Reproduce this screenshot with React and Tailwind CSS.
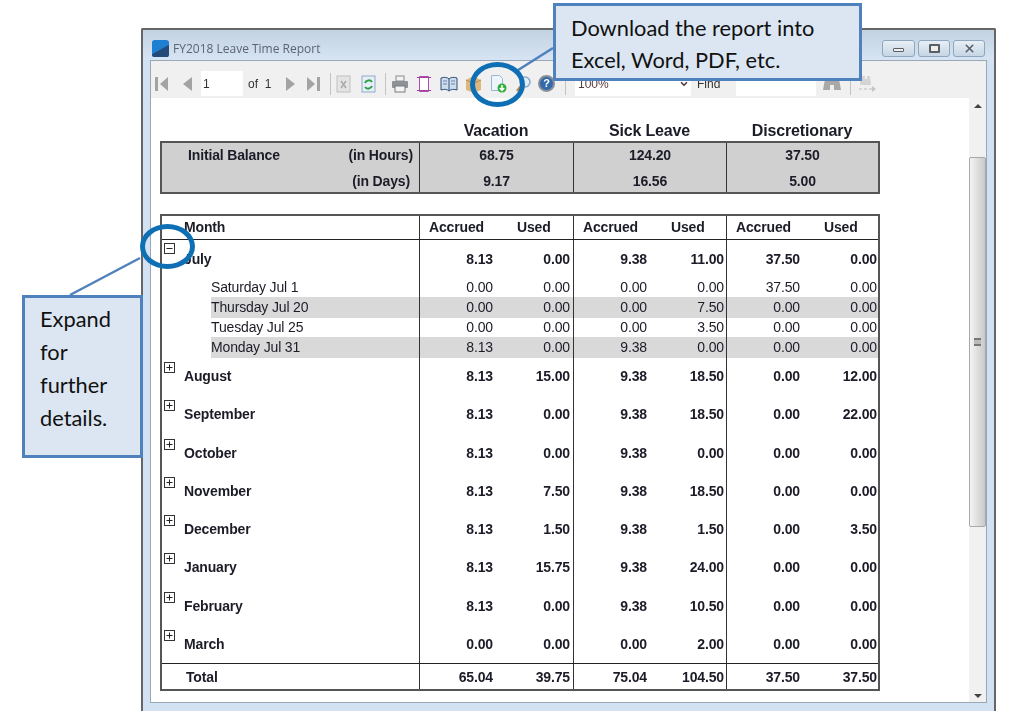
import { X, ChevronDown } from 'lucide-react';

const months = [
  { name: 'August', v: ['8.13', '15.00', '9.38', '18.50', '0.00', '12.00'] },
  { name: 'September', v: ['8.13', '0.00', '9.38', '18.50', '0.00', '22.00'] },
  { name: 'October', v: ['8.13', '0.00', '9.38', '0.00', '0.00', '0.00'] },
  { name: 'November', v: ['8.13', '7.50', '9.38', '18.50', '0.00', '0.00'] },
  { name: 'December', v: ['8.13', '1.50', '9.38', '1.50', '0.00', '3.50'] },
  { name: 'January', v: ['8.13', '15.75', '9.38', '24.00', '0.00', '0.00'] },
  { name: 'February', v: ['8.13', '0.00', '9.38', '10.50', '0.00', '0.00'] },
  { name: 'March', v: ['0.00', '0.00', '0.00', '2.00', '0.00', '0.00'] },
];

const details = [
  { name: 'Saturday Jul 1', v: ['0.00', '0.00', '0.00', '0.00', '37.50', '0.00'] },
  { name: 'Thursday Jul 20', v: ['0.00', '0.00', '0.00', '7.50', '0.00', '0.00'], shade: true },
  { name: 'Tuesday Jul 25', v: ['0.00', '0.00', '0.00', '3.50', '0.00', '0.00'] },
  { name: 'Monday Jul 31', v: ['8.13', '0.00', '9.38', '0.00', '0.00', '0.00'], shade: true },
];

const GRID = 'grid grid-cols-[257px_154px_153px_152px]';

function Pair({ a, b, className = '' }) {
  return (
    <div className={`flex h-full items-center border-l border-[#333] ${className}`}>
      <span className="w-[73px] text-right">{a}</span>
      <span className="w-[77px] text-right">{b}</span>
    </div>
  );
}

function Toggle({ open }) {
  return (
    <svg width="11" height="11" viewBox="0 0 11 11" className={`ml-[2px] shrink-0 self-start ${open ? 'mt-[3px]' : 'mt-[5px]'}`}>
      <rect x="0.5" y="0.5" width="10" height="10" fill="#fff" stroke="#333" />
      <path d={open ? 'M2.5 5.5h6' : 'M2.5 5.5h6M5.5 2.5v6'} stroke="#222" />
    </svg>
  );
}

function GroupRow({ name, v, open, h = 'h-[38.25px]', pad = 'pt-px' }) {
  return (
    <div className={`${GRID} ${h} font-bold`}>
      <div className="flex items-center">
        <Toggle open={open} />
        <span className={`ml-[9px] ${pad}`}>{name}</span>
      </div>
      <Pair a={v[0]} b={v[1]} className={pad} />
      <Pair a={v[2]} b={v[3]} className={pad} />
      <Pair a={v[4]} b={v[5]} className={pad} />
    </div>
  );
}

function DetailRow({ name, v, shade }) {
  return (
    <div className={`${GRID} h-5`}>
      <div className="pl-[49px]">
        <div className={`flex h-full items-center ${shade ? 'bg-[#d9d9d9]' : ''}`}>{name}</div>
      </div>
      {[0, 2, 4].map(i => (
        <div key={i} className={shade ? 'bg-[#d9d9d9]' : ''}>
          <Pair a={v[i]} b={v[i + 1]} />
        </div>
      ))}
    </div>
  );
}

// toolbar drawings
const Arrow = ({ dir, bar }) => (
  <svg width="13" height="16" viewBox="0 0 13 16">
    {dir === 'left' ? (
      <>
        {bar && <rect x="0" y="1" width="3" height="14" fill="#a3a3a3" />}
        <path d={bar ? 'M13 1v14L5 8z' : 'M11 1v14L2 8z'} fill="#a3a3a3" />
      </>
    ) : (
      <>
        <path d={bar ? 'M0 1v14L8 8z' : 'M2 1v14l9-7z'} fill="#a3a3a3" />
        {bar && <rect x="10" y="1" width="3" height="14" fill="#a3a3a3" />}
      </>
    )}
  </svg>
);

const Sep = ({ className }) => <div className={`h-[22px] w-px bg-[#c4c4c4] ${className}`} />;

const IconExport = () => (
  <svg width="15" height="18" viewBox="0 0 15 18">
    <rect x="1" y="1" width="13" height="16" fill="#e4e4e4" stroke="#c0c0c0" />
    <path d="M5 6l5 7M10 6l-5 7" stroke="#a9a9a9" strokeWidth="1.5" />
  </svg>
);
const IconRefresh = () => (
  <svg width="15" height="18" viewBox="0 0 15 18">
    <rect x="1" y="1" width="13" height="16" fill="#e6eff8" stroke="#8fa9c4" />
    <path d="M4 8a4 4 0 0 1 7-1M11 11a4 4 0 0 1-7 1" fill="none" stroke="#27a044" strokeWidth="2" />
  </svg>
);
const IconPrint = () => (
  <svg width="18" height="18" viewBox="0 0 18 18">
    <rect x="5" y="1" width="8" height="5" fill="#f3f3f3" stroke="#8a8a8a" />
    <rect x="1" y="6" width="16" height="7" rx="1" fill="#8d9298" />
    <rect x="4" y="11" width="10" height="6" fill="#f4f4f4" stroke="#7a7a7a" />
  </svg>
);
const IconLayout = () => (
  <svg width="14" height="18" viewBox="0 0 14 18">
    <path d="M2.5 1.5h9v15h-9z" fill="#fff" stroke="#b04fb0" />
    <path d="M0 2.5h14M0 15.5h14" stroke="#a03f9f" />
  </svg>
);
const IconBook = () => (
  <svg width="18" height="16" viewBox="0 0 18 16">
    <path d="M1 2c3-1 6-1 8 1 2-2 5-2 8-1v12c-3-1-6-1-8 1-2-2-5-2-8-1z" fill="#cfdcec" stroke="#2e4f7c" />
    <path d="M9 3v12" stroke="#2e4f7c" />
    <path d="M3 5h4M3 8h4M11 5h4M11 8h4" stroke="#6a86aa" />
  </svg>
);
const IconPackage = () => (
  <svg width="17" height="20" viewBox="0 0 17 20">
    <path d="M1 6l7-4 8 4v10l-7 3-8-3z" fill="#dcb77e" />
    <path d="M9 9v10M1 6l8 3 7-3" fill="none" stroke="#b58f55" />
  </svg>
);
const IconDownload = () => (
  <svg width="17" height="19" viewBox="0 0 17 19">
    <path d="M1.5 1.5h8l3 3v12h-11z" fill="#eef4fb" stroke="#9db7d3" />
    <circle cx="12" cy="14" r="4.5" fill="#2fae3c" />
    <path d="M12 11v5M9.8 14l2.2 2.4 2.2-2.4" fill="none" stroke="#fff" strokeWidth="1.5" />
  </svg>
);
const IconSearch = () => (
  <svg width="16" height="18" viewBox="0 0 16 18">
    <circle cx="10" cy="7" r="5" fill="#e4eef8" stroke="#88a8c8" strokeWidth="1.5" />
    <path d="M6 11l-4 5" stroke="#c28a3a" strokeWidth="2.5" />
  </svg>
);
const IconHelp = () => (
  <div className="flex h-[17px] w-[17px] items-center justify-center rounded-full border-2 border-[#8a8f96] bg-[#3268ac] text-[11px] font-bold text-white">?</div>
);
const IconBinoculars = () => (
  <svg width="18" height="15" viewBox="0 0 18 15">
    <path d="M2 3h5v2h4V3h5l2 11h-7V9H7v5H0z" fill="#a8a8a8" />
  </svg>
);
const IconFindNext = () => (
  <svg width="18" height="20" viewBox="0 0 18 20">
    <path d="M3 2h4v3h2V2h3l1 9H2z" fill="#d4d4d4" />
    <path d="M1 15h3M6 15h3M11 15h3" stroke="#bdbdbd" />
    <path d="M14 12l4 3-4 3z" fill="#c4c4c4" />
  </svg>
);

const CTRL = 'flex h-[17px] items-center justify-center rounded-[3px] border border-[#8ea6be] bg-gradient-to-b from-[#e8eff6] to-[#c6d5e5] text-[#5a5f66]';

export default function App() {
  return (
    <div className="relative h-[711px] w-[1024px] overflow-hidden bg-white font-['Liberation_Sans',Arial,sans-serif] text-[14px] tracking-[-0.15px] text-[#1c1c28]">
      {/* report window */}
      <div className="ml-[141px] mt-[28px] flex h-[683px] w-[855px] flex-col rounded-t-[2px] border-x-2 border-t-2 border-[#666] bg-[#d3e2f2] blur-[0.35px]">
        {/* title bar */}
        <div className="flex h-[30px] shrink-0 items-center bg-gradient-to-b from-[#c3d2e1] to-[#d6e4f3] px-[9px] pt-[7px] tracking-normal">
          <svg width="17" height="17" viewBox="0 0 18 18" className="shrink-0">
            <rect width="18" height="18" rx="3" fill="#1f7fd0" />
            <path d="M0 15L18 5v10a3 3 0 0 1-3 3H3a3 3 0 0 1-3-3z" fill="#234a78" />
          </svg>
          <span className="ml-[4px] font-['Open_Sans',sans-serif] text-[12px] text-[#5c6470]">FY2018 Leave Time Report</span>
          <div className="ml-auto flex gap-[3px]">
            <div className={`${CTRL} w-[33px]`}><div className="mt-[3px] h-[4px] w-[11px] rounded-[1px] border border-[#5a5f66] bg-[#eee]" /></div>
            <div className={`${CTRL} w-[32px]`}><div className="h-[9px] w-[11px] rounded-[1px] border-2 border-[#5a5f66] bg-[#eee]" /></div>
            <div className={`${CTRL} w-[32px]`}><X size={13} strokeWidth={3} /></div>
          </div>
        </div>

        {/* inner frame */}
        <div className="mx-[7px] flex h-[643px] w-[837px] shrink-0 flex-col border border-[#9aa7b5] bg-white">
          {/* toolbar */}
          <div className="flex h-[37px] shrink-0 items-center bg-[#f0f0f0] pl-[4px] pt-[8px] text-[12px] tracking-normal text-[#333]">
            <Arrow dir="left" bar />
            <div className="ml-[13px]"><Arrow dir="left" /></div>
            <div className="ml-[7px] flex h-[25px] w-[42px] items-center bg-white pl-[2px]">1</div>
            <span className="ml-[5px] w-[36px]">of&nbsp; 1</span>
            <Arrow dir="right" />
            <div className="ml-[10px]"><Arrow dir="right" bar /></div>
            <Sep className="ml-[10px]" />
            <div className="ml-[5px]"><IconExport /></div>
            <div className="ml-[10px]"><IconRefresh /></div>
            <Sep className="ml-[9px]" />
            <div className="ml-[5px]"><IconPrint /></div>
            <div className="ml-[8px]"><IconLayout /></div>
            <div className="ml-[9px]"><IconBook /></div>
            <div className="ml-[7px]"><IconPackage /></div>
            <div className="ml-[8px]"><IconDownload /></div>
            <div className="ml-[8px]"><IconSearch /></div>
            <div className="ml-[7px]"><IconHelp /></div>
            <Sep className="ml-[10px]" />
            <div className="ml-[9px] flex h-[25px] w-[116px] items-center justify-between bg-white pl-[3px] pr-[2px] text-[#5a3a3a]">
              100%
              <ChevronDown size={10} strokeWidth={4} />
            </div>
            <span className="ml-[6px] w-[39px]">Find</span>
            <div className="h-[25px] w-[80px] bg-white" />
            <div className="ml-[7px]"><IconBinoculars /></div>
            <Sep className="ml-[9px]" />
            <div className="ml-[7px]"><IconFindNext /></div>
          </div>

          {/* report body */}
          <div className="flex min-h-0 flex-1">
            <div className="w-[819px] pl-[9px] pt-[22px]">
              <div className={`${GRID} h-[21px] w-[720px] pl-[2px] text-center text-[16px] leading-[21px] font-bold`}>
                <div />
                <div>Vacation</div>
                <div>Sick Leave</div>
                <div>Discretionary</div>
              </div>

              {/* initial balance */}
              <div className="w-[720px] border-2 border-[#555] bg-[#d0d0d0] font-bold">
                <div className={`${GRID} h-[26px] [&>*]:pb-[2px]`}>
                  <div className="flex items-center justify-between pl-[26px] pr-[6px]"><span>Initial Balance</span><span>(in Hours)</span></div>
                  <div className="flex items-center justify-center border-l border-[#333]">68.75</div>
                  <div className="flex items-center justify-center border-l border-[#333]">124.20</div>
                  <div className="flex items-center justify-center border-l border-[#333]">37.50</div>
                </div>
                <div className={`${GRID} -mt-[4px] h-[27px] [&>*]:pt-[6px]`}>
                  <div className="flex items-center justify-end pr-[9px]">(in Days)</div>
                  <div className="flex items-center justify-center border-l border-[#333]">9.17</div>
                  <div className="flex items-center justify-center border-l border-[#333]">16.56</div>
                  <div className="flex items-center justify-center border-l border-[#333]">5.00</div>
                </div>
              </div>

              {/* monthly table */}
              <div className="mt-[20px] w-[720px] border-2 border-[#555]">
                <div className={`${GRID} h-[24px] border-b border-[#222] font-bold`}>
                  <div className="flex items-center pl-[22px]">Month</div>
                  {[0, 1, 2].map(i => (
                    <div key={i} className="flex items-center border-l border-[#333] pl-[9px]">
                      <span className="w-[88px]">Accrued</span>
                      <span>Used</span>
                    </div>
                  ))}
                </div>
                <GroupRow name="July" open h="h-[37px]" pad="pt-[2px]" v={['8.13', '0.00', '9.38', '11.00', '37.50', '0.00']} />
                {details.map(d => <DetailRow key={d.name} {...d} />)}
                {months.map(m => <GroupRow key={m.name} {...m} />)}
                <div className={`${GRID} h-[26px] border-t border-[#222] font-bold`}>
                  <div className="flex items-center pl-[24px] pt-[2px]">Total</div>
                  <Pair a="65.04" b="39.75" className="pt-[2px]" />
                  <Pair a="75.04" b="104.50" className="pt-[2px]" />
                  <Pair a="37.50" b="37.50" className="pt-[2px]" />
                </div>
              </div>
            </div>

            {/* scrollbar */}
            <div className="flex w-[17px] flex-col items-center bg-[#f1f1f1] text-[#444]">
              <div className="flex h-[59px] w-full justify-center pt-[6px]">
                <svg width="8" height="4" viewBox="0 0 8 4"><path d="M4 0l4 4H0z" fill="#444" /></svg>
              </div>
              <div className="flex h-[370px] w-full items-center justify-center rounded-[2px] border border-[#a8a8a8] bg-gradient-to-r from-[#f4f4f4] to-[#c9c9c9]">
                <div className="h-[8px] w-[7px] border-y-2 border-[#777] bg-[#bbb]" />
              </div>
              <div className="mt-auto pb-[4px]">
                <svg width="8" height="4" viewBox="0 0 8 4"><path d="M4 4l4-4H0z" fill="#444" /></svg>
              </div>
            </div>
          </div>
        </div>
      </div>

      {/* annotations drawn over the screenshot */}
      <svg width="1024" height="711" className="absolute inset-0">
        <path d="M553 48L515 72" stroke="#4f81bd" strokeWidth="2.5" />
        <path d="M140 258L70 295" stroke="#4f81bd" strokeWidth="2.5" />
      </svg>
      <div className="absolute left-[470px] top-[62px] h-[45px] w-[55px] rounded-[50%] border-[5px] border-[#0e6fb4]" />
      <div className="absolute left-[140px] top-[224px] h-[45px] w-[55px] rounded-[50%] border-[5px] border-[#0e6fb4]" />

      <div className="absolute left-[553px] top-[3px] h-[78px] w-[309px] border-[3px] border-[#4f81bd] bg-[#dce6f2] pl-[15px] pt-[6px] font-['Lato',sans-serif] text-[21.8px] leading-[32px] tracking-normal text-[#111]">
        Download the report into<br />Excel, Word, PDF, etc.
      </div>
      <div className="absolute left-[22px] top-[295px] h-[163px] w-[121px] border-[3px] border-[#4f81bd] bg-[#dce6f2] pl-[15px] pt-[4px] font-['Lato',sans-serif] text-[21.8px] leading-[33px] tracking-normal text-[#111]">
        Expand<br />for<br />further<br />details.
      </div>
    </div>
  );
}
